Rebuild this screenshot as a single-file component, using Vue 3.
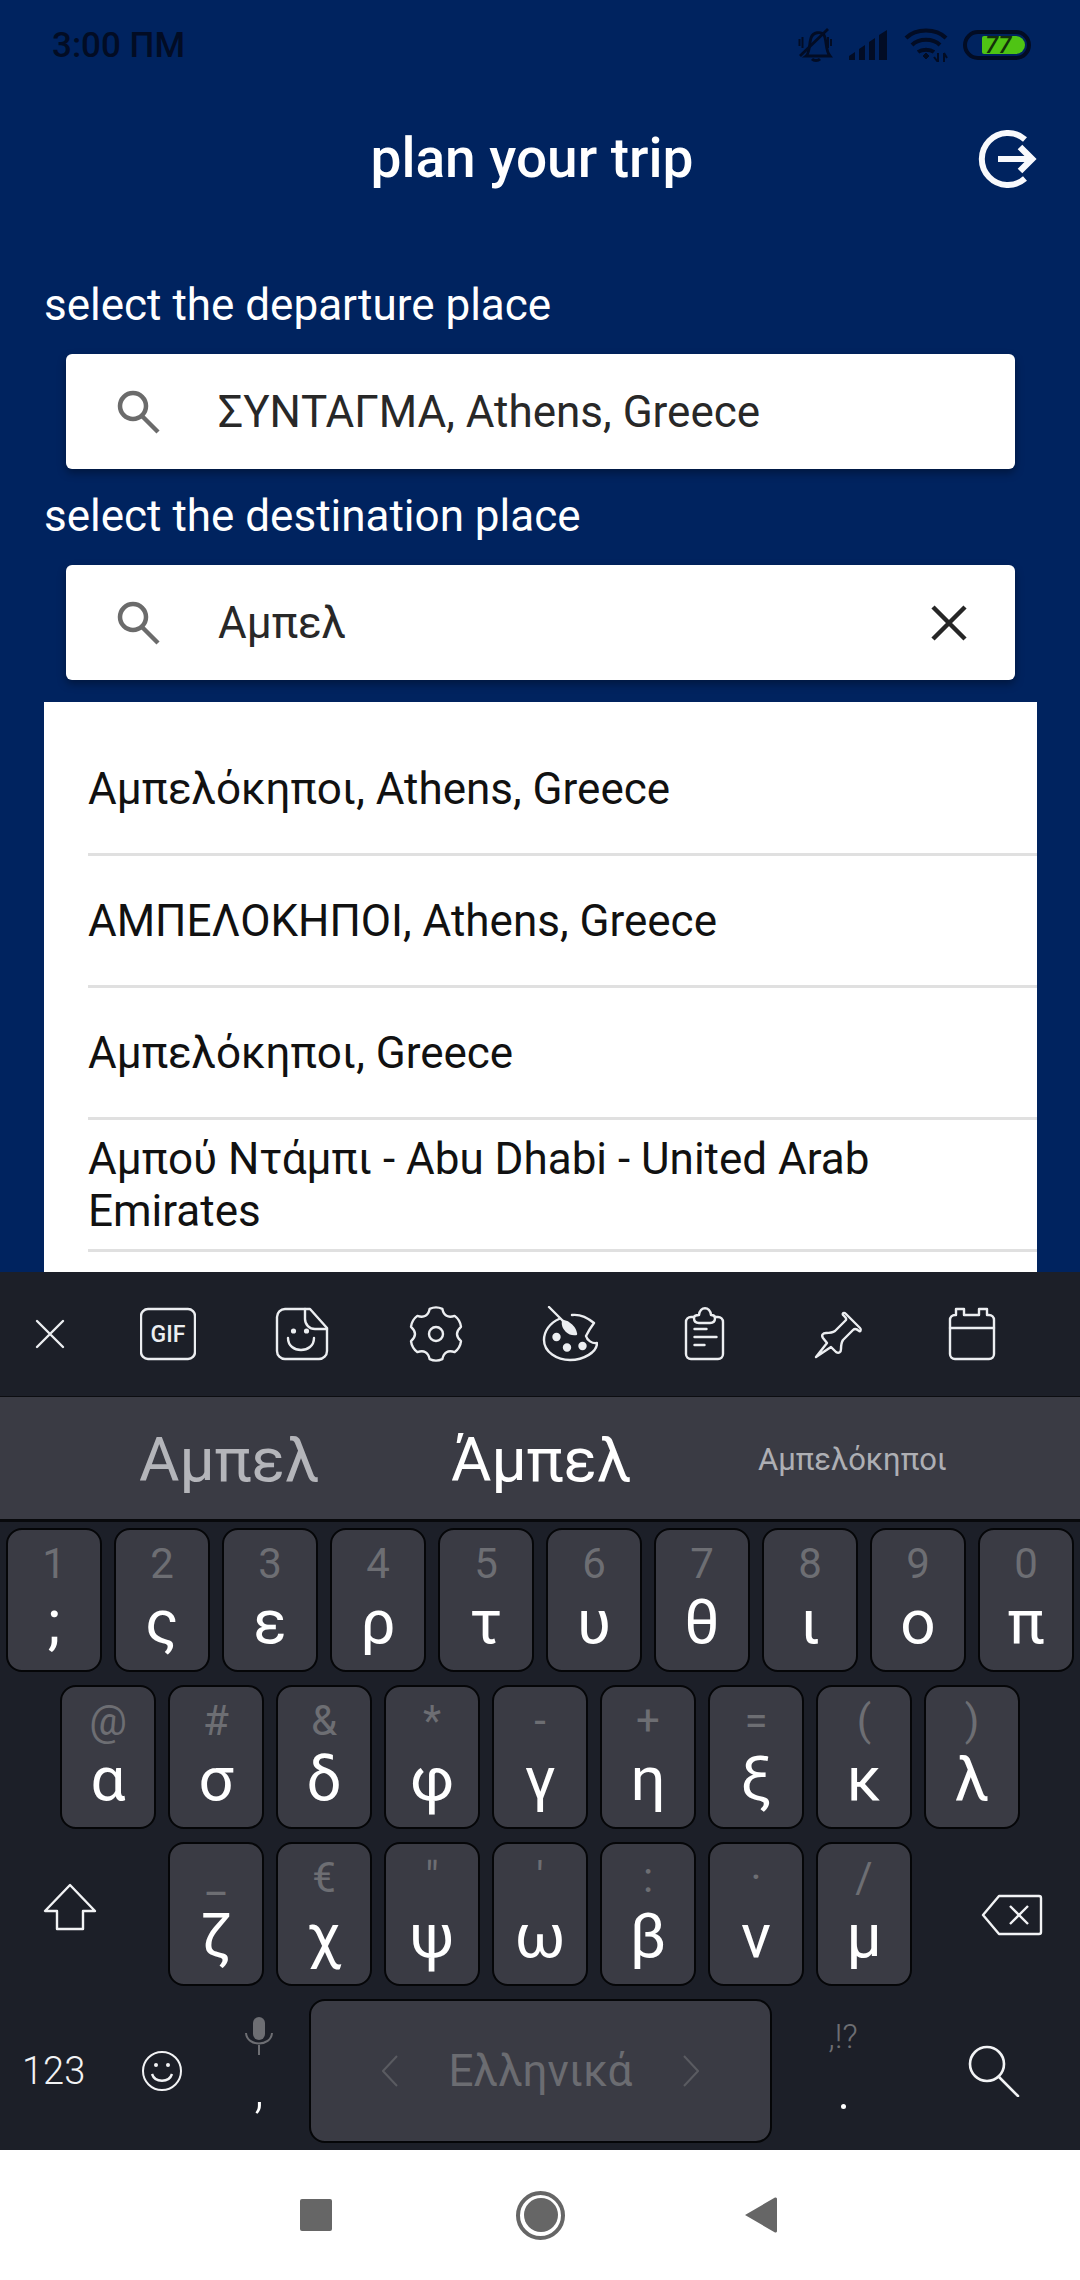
<template>
  <div class="screen">
    <div class="app">
      <div class="status-bar">
        <span class="clock">3:00 ΠΜ</span>
        <div class="status-icons">
          <svg width="36" height="34" viewBox="0 0 36 34" fill="none" stroke="#020c24" stroke-width="2.8">
            <path d="M8 28c4-3 3-12 5-18 2-6 10-7 13-3 3 5 1 15 6 21z" />
            <path d="M14 31c2 2 6 2 8 0" stroke-width="3" />
            <path d="M1.500 11v7M4.500 9v11M30 9v11M33 11v7" stroke-width="2" />
            <path d="M2 28 30 1" />
          </svg>
          <svg width="40" height="30" viewBox="0 0 40 30" fill="#020c24">
            <path d="M0 30v-4l6-4v8zM10 30V19l6-4v15zM20 30V12l6-4v22zM30 30V5l8-5v30z" />
          </svg>
          <svg width="44" height="34" viewBox="0 0 44 34" fill="none" stroke="#020c24" stroke-width="4">
            <path d="M2 10c10-10 30-10 40 0M8 17c7-7 21-7 28 0M14 24c4-3 12-3 16 0" />
            <path d="M19 28l3-3 3 3-3 3z" fill="#020c24" stroke-width="1" />
            <path d="M34 34v-9M30 29l4 5M40 25v9M40 25l3 5" stroke-width="2" />
          </svg>
          <div class="battery">
            <div class="battery-fill"><span>77</span></div>
          </div>
        </div>
      </div>

      <header class="top-bar">
        <h1>plan your trip</h1>
        <svg class="logout" width="60" height="58" viewBox="0 0 60 58" fill="none" stroke="#f8f9fc" stroke-width="6">
          <path d="M47 9.500A26 26 0 1 0 47 48.500" />
          <path d="M20 29h33" />
          <path d="M42 17l12 12-12 12" stroke-width="6.500" />
        </svg>
      </header>

      <label class="field-label first">select the departure place</label>
      <div class="search-box">
        <svg class="search-ico" width="46" height="46" viewBox="0 0 46 46" fill="none" stroke="#6b6b6b" stroke-width="4.500">
          <circle cx="17" cy="17" r="13" />
          <path d="M26 27l16 16" />
        </svg>
        <span class="search-text">ΣΥΝΤΑΓΜΑ, Athens, Greece</span>
      </div>

      <label class="field-label second">select the destination place</label>
      <div class="search-box">
        <svg class="search-ico" width="46" height="46" viewBox="0 0 46 46" fill="none" stroke="#6b6b6b" stroke-width="4.500">
          <circle cx="17" cy="17" r="13" />
          <path d="M26 27l16 16" />
        </svg>
        <span class="search-text">Αμπελ</span>
        <svg class="clear" width="36" height="36" viewBox="0 0 36 36" fill="none" stroke="#262626" stroke-width="4.500">
          <path d="M2 2l32 32M34 2 2 34" />
        </svg>
      </div>

      <ul class="results">
        <li v-for="place in places" :key="place">{{ place }}</li>
      </ul>
    </div>

    <div class="keyboard">
      <div class="kb-tools">
        <svg v-for="tool in tools" :key="tool.name" width="56" height="56" viewBox="0 0 56 56" fill="none" stroke="#eceef1" stroke-width="2.400" stroke-linejoin="round" stroke-linecap="round">
          <path v-for="d in tool.paths" :key="d" :d="d" />
          <path v-for="d in tool.fills || []" :key="d" :d="d" fill="#eceef1" />
          <circle v-for="c in tool.dots || []" :key="c[0] + '-' + c[1]" :cx="c[0]" :cy="c[1]" :r="c[2]" :fill="c[3] ? '#eceef1' : 'none'" />
          <text v-if="tool.name === 'gif'" x="28" y="36" class="gif-text">GIF</text>
        </svg>
      </div>

      <div class="kb-suggest">
        <span class="sug-left">Αμπελ</span>
        <span class="sug-mid">Άμπελ</span>
        <span class="sug-right">Αμπελόκηποι</span>
      </div>

      <div class="kb-keys">
        <div v-for="(row, i) in rows" :key="i" class="kb-row">
          <svg v-if="i === 2" class="side-key shift" width="54" height="48" viewBox="0 0 54 48" fill="none" stroke="#f2f3f5" stroke-width="2.400" stroke-linejoin="round">
            <path d="M27 2 2 28h12v18h26V28h12z" />
          </svg>
          <div v-for="k in row" :key="k[1]" class="key">
            <span class="key-alt">{{ k[0] }}</span>
            <span class="key-main">{{ k[1] }}</span>
          </div>
          <svg v-if="i === 2" class="side-key backspace" width="62" height="42" viewBox="0 0 62 42" fill="none" stroke="#f2f3f5" stroke-width="2.400" stroke-linejoin="round">
            <path d="M18 2h40a2 2 0 0 1 2 2v34a2 2 0 0 1-2 2H18L2 21z" />
            <path d="M29 12l18 18M47 12 29 30" />
          </svg>
        </div>

        <div class="kb-bottom">
          <span class="num-key">123</span>
          <svg class="emoji" width="42" height="42" viewBox="0 0 42 42" fill="none" stroke="#f2f3f5" stroke-width="2">
            <circle cx="21" cy="21" r="19" />
            <path d="M11 24c3 9 17 9 20 0" stroke-width="2.400" />
            <circle cx="15" cy="15" r="2" fill="#f2f3f5" stroke="none" />
            <circle cx="27" cy="15" r="2" fill="#f2f3f5" stroke="none" />
          </svg>
          <div class="comma-key">
            <svg width="28" height="38" viewBox="0 0 28 38" fill="none" stroke="#6d6e73" stroke-width="2">
              <rect x="8" y="0" width="12" height="23" rx="6" fill="#6d6e73" stroke="none" />
              <path d="M1 16c1 14 25 14 26 0M14 28v10" />
            </svg>
            <span>,</span>
          </div>
          <div class="space-key">
            <svg width="16" height="32" viewBox="0 0 16 32" fill="none" stroke="#5a5b61" stroke-width="2"><path d="M15 1 1 16l14 15" /></svg>
            <span>Ελληνικά</span>
            <svg width="16" height="32" viewBox="0 0 16 32" fill="none" stroke="#5a5b61" stroke-width="2"><path d="M1 1l14 15L1 31" /></svg>
          </div>
          <div class="dot-key">
            <small>,!?</small>
            <i></i>
          </div>
          <svg class="kb-search" width="52" height="52" viewBox="0 0 52 52" fill="none" stroke="#f2f3f5" stroke-width="2.600" stroke-linecap="round">
            <circle cx="19" cy="19" r="17" />
            <path d="M31 32l19 19" />
          </svg>
        </div>
      </div>
    </div>

    <nav class="nav-bar">
      <span class="nav-square"></span>
      <span class="nav-circle"><i></i></span>
      <svg class="nav-back" width="32" height="36" viewBox="0 0 32 36"><path d="M0 18 30 .500a1.500 1.500 0 0 1 2 1.500v32a1.500 1.500 0 0 1-2 1.500z" fill="#666" /></svg>
    </nav>
  </div>
</template>

<script setup>
const places = [
  'Αμπελόκηποι, Athens, Greece',
  'ΑΜΠΕΛΟΚΗΠΟΙ, Athens, Greece',
  'Αμπελόκηποι, Greece',
  'Αμπού Ντάμπι - Abu Dhabi - United Arab Emirates'
]

// six teeth, one pointing straight up
const gearPath = () => {
  const pt = (deg, r) => {
    const a = (deg * Math.PI) / 180
    return `${(28 + r * Math.cos(a)).toFixed(1)} ${(28 + r * Math.sin(a)).toFixed(1)}`
  }
  let d = `M${pt(-104, 26)}`
  for (let i = 0; i < 6; i++) {
    const a = -90 + 60 * i
    d += `Q${pt(a, 28)} ${pt(a + 14, 26)}Q${pt(a + 30, 17)} ${pt(a + 46, 26)}`
  }
  return d + 'z'
}

const tools = [
  { name: 'close', paths: ['M15 15l26 26M41 15 15 41'] },
  { name: 'gif', paths: ['M8 3h40a7 7 0 0 1 7 7v36a7 7 0 0 1-7 7H8a7 7 0 0 1-7-7V10a7 7 0 0 1 7-7z'] },
  {
    name: 'sticker',
    paths: [
      'M36 3H11a8 8 0 0 0-8 8v34a8 8 0 0 0 8 8h34a8 8 0 0 0 8-8V22z',
      'M31 3v10a10 10 0 0 0 10 10h12',
      'M14 32c0 16 26 16 26 0'
    ],
    dots: [[19.500, 25, 1.400, true], [32.500, 25, 1.400, true]]
  },
  {
    name: 'settings',
    paths: [gearPath()],
    dots: [[28, 28, 7, false]]
  },
  {
    name: 'palette',
    paths: [
      'M17 13C8 17 2 25 2 34c0 12 13 20 26 20 14 0 27-8 27-17-5 1-10-3-11-7 2-4 5-9 8-13C46 12 38 8 30 9',
      'M7 1l14 14'
    ],
    fills: ['M21 15c6 1 12 6 13 13-7 1-14-5-13-13z'],
    dots: [[14.500, 31, 3, true], [25, 41.500, 3, true], [40.500, 40, 3, true]]
  },
  {
    name: 'clipboard',
    paths: [
      'M18 11h-3a5 5 0 0 0-5 5v32a5 5 0 0 0 5 5h27a5 5 0 0 0 5-5V16a5 5 0 0 0-5-5h-3',
      'M18 12c0-2 2-3 5-3 1-9 11-9 12 0 3 0 4 1 4 3 0 3-2 5-5 5H23c-3 0-5-2-5-5z',
      'M18.500 23h12M18.500 31h22M18.500 39h10'
    ]
  },
  {
    name: 'pin',
    paths: [
      'M6 51 17 37 13 32c-2-3 0-5 3-5 3 0 6 0 9-2L36 14c1-2-1-3-3-5-1-2 1-3 3-1l14 14c2 2 0 4-1 3-2-2-4-3-6-1L33 34c-2 3-2 6-2 9 0 3-2 5-5 3l-5-5z'
    ]
  },
  {
    name: 'calendar',
    paths: [
      'M12 9h-1a5 5 0 0 0-5 5v34a5 5 0 0 0 5 5h34a5 5 0 0 0 5-5V14a5 5 0 0 0-5-5h-2V3h-8v6H20V3h-8z',
      'M6 22h44'
    ]
  }
]

const rows = [
  [['1', ';'], ['2', 'ς'], ['3', 'ε'], ['4', 'ρ'], ['5', 'τ'], ['6', 'υ'], ['7', 'θ'], ['8', 'ι'], ['9', 'ο'], ['0', 'π']],
  [['@', 'α'], ['#', 'σ'], ['&', 'δ'], ['*', 'φ'], ['-', 'γ'], ['+', 'η'], ['=', 'ξ'], ['(', 'κ'], [')', 'λ']],
  [['_', 'ζ'], ['€', 'χ'], ['"', 'ψ'], ["'", 'ω'], [':', 'β'], ['·', 'ν'], ['/', 'μ']]
]
</script>

<style scoped>
.screen {
  width: 1080px;
  height: 2280px;
  display: flex;
  flex-direction: column;
  overflow: hidden;
  font-family: Roboto, "Noto Sans", sans-serif;
}

.app {
  height: 1272px;
  background: #00235f;
  overflow: hidden;
  display: flex;
  flex-direction: column;
}

/* Status bar */
.status-bar {
  height: 86px;
  display: flex;
  justify-content: space-between;
  align-items: center;
  padding: 4px 49px 0 52px;
  box-sizing: border-box;
}

.clock {
  font-size: 35px;
  font-weight: 500;
  color: #020c24;
}

.status-icons {
  display: flex;
  align-items: center;
  gap: 15px;
}

.battery {
  width: 68px;
  height: 30px;
  border: 4px solid #020c24;
  border-radius: 15px;
  box-sizing: border-box;
  display: flex;
  justify-content: flex-end;
  align-items: center;
  padding-right: 2px;
}

.battery-fill {
  width: 43px;
  height: 18px;
  background: #4fc414;
  border-radius: 2px 9px 9px 2px;
  font-size: 24px;
  line-height: 18px;
  font-weight: 500;
  font-style: italic;
  color: #13300a;
  padding-left: 3px;
  box-sizing: border-box;
}

/* Header */
.top-bar {
  height: 144px;
  display: flex;
  align-items: center;
  justify-content: center;
  padding-right: 16px;
  position: relative;
}

.top-bar h1 {
  margin: 0;
  font-size: 55px;
  font-weight: 500;
  color: #fff;
}

.logout {
  position: absolute;
  right: 42px;
  top: 44px;
}

/* Search inputs */
.field-label {
  display: block;
  font-size: 44px;
  line-height: 50px;
  color: #fff;
  padding-left: 44px;
}

.first {
  margin-top: 50px;
  margin-bottom: 24px;
}

.second {
  margin-top: 22px;
  margin-bottom: 24px;
}

.search-box {
  flex: none;
  height: 115px;
  margin: 0 65px 0 66px;
  background: #fff;
  border-radius: 6px;
  box-shadow: 0 4px 8px rgba(0, 0, 0, 0.35);
  display: flex;
  align-items: center;
  padding: 0 50px;
  position: relative;
}

.search-text {
  margin-left: 56px;
  font-size: 44px;
  color: #282828;
}

.clear {
  position: absolute;
  right: 48px;
  top: 40px;
}

/* Results */
.results {
  list-style: none;
  margin: 22px 43px 0 44px;
  padding: 0 0 0 44px;
  background: #fff;
  flex: 1;
}

.results li {
  height: 132px;
  box-sizing: border-box;
  border-bottom: 3px solid #e0e0e0;
  display: flex;
  align-items: center;
  font-size: 44px;
  line-height: 52px;
  color: #111;
  padding-right: 120px;
}

.results li:first-child {
  height: 154px;
  padding-top: 22px;
}

/* Keyboard */
.keyboard {
  height: 878px;
  background: #1c1f28;
  display: flex;
  flex-direction: column;
}

.kb-tools {
  height: 125px;
  box-sizing: border-box;
  padding-left: 22px;
  display: flex;
  align-items: center;
  gap: 78px;
  border-bottom: 1px solid #0c0d11;
}

.kb-tools svg:first-child {
  margin-right: -16px;
}

.gif-text {
  font-family: Roboto, sans-serif;
  font-size: 23px;
  font-weight: 500;
  fill: #eceef1;
  stroke: none;
  text-anchor: middle;
}

.kb-suggest {
  height: 125px;
  background: #3a3b44;
  border-bottom: 3px solid #08090c;
  box-sizing: border-box;
  display: flex;
  align-items: center;
  padding: 2px 0 0 139px;
}

.sug-left {
  font-size: 62px;
  color: #b4b5ba;
  width: 312px;
}

.sug-mid {
  font-size: 62px;
  color: #fff;
  width: 307px;
}

.sug-right {
  font-size: 31px;
  color: #aeafb4;
}

.kb-keys {
  padding-top: 6px;
  display: flex;
  flex-direction: column;
  gap: 13px;
}

.kb-row {
  display: flex;
  justify-content: center;
  align-items: center;
  gap: 12px;
  position: relative;
}

.key {
  width: 96px;
  height: 144px;
  box-sizing: border-box;
  background: #3a3b44;
  border: 2px solid #050608;
  border-radius: 16px;
  display: flex;
  flex-direction: column;
  align-items: center;
  color: #fff;
}

.key-alt {
  height: 50px;
  margin-top: 9px;
  font-size: 42px;
  line-height: 50px;
  color: #6d6e73;
}

.key-main {
  font-size: 62px;
  line-height: 66px;
}

.side-key {
  position: absolute;
}

.shift {
  left: 43px;
  top: 41px;
}

.backspace {
  right: 37px;
  top: 52px;
}

.kb-bottom {
  display: flex;
  align-items: center;
  height: 144px;
  padding-left: 22px;
}

.num-key {
  font-size: 38px;
  font-weight: 300;
  color: #f2f3f5;
  width: 119px;
}

.emoji {
  flex: none;
}

.comma-key {
  width: 50px;
  margin-left: 51px;
  margin-bottom: 10px;
  display: flex;
  flex-direction: column;
  align-items: center;
  color: #fff;
  font-size: 52px;
  font-weight: 300;
  line-height: 50px;
  height: 98px;
  justify-content: space-between;
}

.space-key {
  width: 463px;
  height: 144px;
  margin-left: 25px;
  box-sizing: border-box;
  background: #3a3b44;
  border: 2px solid #050608;
  border-radius: 16px;
  display: flex;
  align-items: center;
  justify-content: center;
  gap: 50px;
  font-size: 44px;
  color: #6b6c71;
}

.dot-key {
  width: 60px;
  margin-left: 41px;
  margin-bottom: 14px;
  display: flex;
  flex-direction: column;
  align-items: center;
  height: 90px;
  justify-content: space-between;
}

.dot-key small {
  font-size: 34px;
  line-height: 34px;
  font-weight: 300;
  color: #6d6e73;
}

.dot-key i {
  width: 5px;
  height: 5px;
  border-radius: 50%;
  background: #fff;
}

.kb-search {
  margin-left: 95px;
  flex: none;
}

/* Android nav */
.nav-bar {
  flex: 1;
  background: #fff;
  display: flex;
  align-items: center;
  justify-content: center;
  gap: 184px;
  padding-right: 3px;
}

.nav-square {
  width: 32px;
  height: 32px;
  background: #666;
  border-radius: 2px;
}

.nav-circle {
  width: 49px;
  height: 49px;
  border-radius: 50%;
  border: 4px solid #666;
  box-sizing: border-box;
  display: flex;
  align-items: center;
  justify-content: center;
}

.nav-circle i {
  width: 34px;
  height: 34px;
  background: #666;
  border-radius: 50%;
}

.nav-back {
  margin-left: -4px;
}
</style>
